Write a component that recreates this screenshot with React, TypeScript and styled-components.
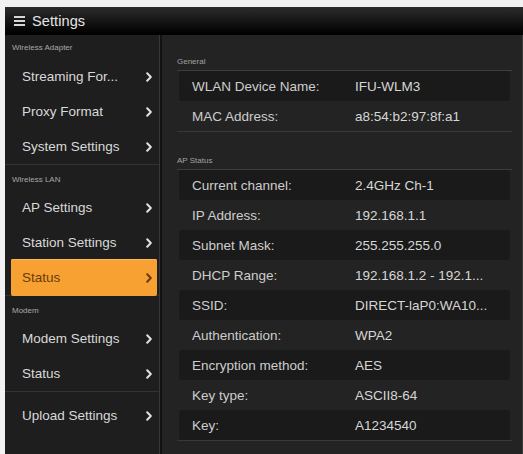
import React from "react";
import styled, { createGlobalStyle, css } from "styled-components";

const GlobalStyle = createGlobalStyle`
  html, body {
    margin: 0;
    padding: 0;
    background: #f2f2f2;
  }
  * { box-sizing: border-box; }
`;

const Frame = styled.div`
  margin: 7px 0 0 5px;
  width: 518px;
  height: 447px;
  display: flex;
  flex-direction: column;
  background: #161616;
  font-family: "Liberation Sans", Arial, Helvetica, sans-serif;
  overflow: hidden;
`;

const TitleBar = styled.div`
  height: 28px;
  flex: none;
  display: flex;
  align-items: center;
  gap: 7px;
  padding-left: 8px;
  background: linear-gradient(#2c2c2c 0%, #141414 55%, #000 100%);
  border-bottom: 1px solid #000;
`;

const MenuIcon = styled.span`
  width: 11px;
  height: 10px;
  display: flex;
  flex-direction: column;
  justify-content: space-between;
  margin-left: 1px;
  & > i {
    display: block;
    height: 2px;
    background: #d6d6d6;
  }
`;

const Title = styled.span`
  color: #e6e6e6;
  font-size: 14.5px;
  letter-spacing: 0.1px;
`;

const Body = styled.div`
  flex: 1;
  min-height: 0;
  display: flex;
`;

const Sidebar = styled.nav`
  width: 155px;
  flex: none;
  background: #1e1e1e;
  border-right: 1px solid #383838;
`;

const Group = styled.div<{ $pad?: boolean; $last?: boolean }>`
  border-bottom: ${(p) => (p.$last ? "none" : "1px solid #333")};
  padding-top: ${(p) => (p.$pad ? "6px" : "0")};
`;

const GroupTitle = styled.div<{ $first?: boolean }>`
  height: ${(p) => (p.$first ? "24px" : "25px")};
  padding: ${(p) => (p.$first ? "8px" : "10px")} 0 0 7px;
  font-size: 8px;
  line-height: 10px;
  color: #a8a8a8;
`;

const Item = styled.div<{ $active?: boolean }>`
  height: 35px;
  display: flex;
  align-items: center;
  justify-content: space-between;
  padding: 0 7px 0 17px;
  font-size: 13.5px;
  color: #d9d9d9;
  ${(p) =>
    p.$active &&
    css`
      height: 37px;
      margin: -1px 2px -1px 6px;
      padding: 0 5px 0 11px;
      background: #f6a132;
      border-radius: 2px;
      color: #6a3b0c;
      box-shadow: inset 0 1px 0 #f9b85a;
      position: relative;
    `}
`;

const Chevron = ({ color }: { color: string }) => (
  <svg width="6" height="10" viewBox="0 0 6 10">
    <path d="M1.2 1.2 L4.8 5 L1.2 8.8" fill="none" stroke={color} strokeWidth="2" strokeLinecap="round" strokeLinejoin="round" />
  </svg>
);

const Main = styled.main`
  flex: 1;
  background: #232323;
  border-left: 2px solid #121212;
  border-right: 1px solid #3c3c3c;
  padding: 18px 10px 0 15px;
`;

const Section = styled.section<{ $gap?: boolean }>`
  margin-top: ${(p) => (p.$gap ? "20px" : "0")};
  border-bottom: 1px solid #383838;
`;

const SectionTitle = styled.div`
  height: 18px;
  line-height: 18px;
  font-size: 8px;
  color: #a2a2a2;
  border-bottom: 1px solid #3c3c3c;
`;

const Row = styled.div<{ $dark?: boolean }>`
  height: 30px;
  margin: 0 2px;
  display: grid;
  grid-template-columns: 163px 1fr;
  align-items: center;
  padding-left: 13px;
  font-size: 13.5px;
  background: ${(p) => (p.$dark ? "#1a1a1a" : "transparent")};
  border-radius: 3px;
`;

const Label = styled.span`
  color: #cdcdcd;
`;

const Value = styled.span`
  color: #d6d6d6;
  white-space: nowrap;
`;

type NavItem = { label: string; active?: boolean };
type NavGroup = { title?: string; items: NavItem[] };

const nav: NavGroup[] = [
  {
    title: "Wireless Adapter",
    items: [{ label: "Streaming For..." }, { label: "Proxy Format" }, { label: "System Settings" }],
  },
  {
    title: "Wireless LAN",
    items: [{ label: "AP Settings" }, { label: "Station Settings" }, { label: "Status", active: true }],
  },
  { title: "Modem", items: [{ label: "Modem Settings" }, { label: "Status" }] },
  { items: [{ label: "Upload Settings" }] },
];

const general: [string, string][] = [
  ["WLAN Device Name:", "IFU-WLM3"],
  ["MAC Address:", "a8:54:b2:97:8f:a1"],
];

const apStatus: [string, string][] = [
  ["Current channel:", "2.4GHz Ch-1"],
  ["IP Address:", "192.168.1.1"],
  ["Subnet Mask:", "255.255.255.0"],
  ["DHCP Range:", "192.168.1.2 - 192.1..."],
  ["SSID:", "DIRECT-laP0:WA10..."],
  ["Authentication:", "WPA2"],
  ["Encryption method:", "AES"],
  ["Key type:", "ASCII8-64"],
  ["Key:", "A1234540"],
];

export default function App() {
  return (
    <>
      <GlobalStyle />
      <Frame>
        <TitleBar>
          <MenuIcon>
            <i />
            <i />
            <i />
          </MenuIcon>
          <Title>Settings</Title>
        </TitleBar>
        <Body>
          <Sidebar>
            {nav.map((g, gi) => (
              <Group key={gi} $pad={!g.title} $last={gi === nav.length - 1}>
                {g.title && <GroupTitle $first={gi === 0}>{g.title}</GroupTitle>}
                {g.items.map((it) => (
                  <Item key={it.label} $active={it.active}>
                    <span>{it.label}</span>
                    <Chevron color={it.active ? "#6a3b0c" : "#e0e0e0"} />
                  </Item>
                ))}
              </Group>
            ))}
          </Sidebar>
          <Main>
            <Section>
              <SectionTitle>General</SectionTitle>
              {general.map(([k, v], i) => (
                <Row key={k} $dark={i % 2 === 0}>
                  <Label>{k}</Label>
                  <Value>{v}</Value>
                </Row>
              ))}
            </Section>
            <Section $gap>
              <SectionTitle>AP Status</SectionTitle>
              {apStatus.map(([k, v], i) => (
                <Row key={k} $dark={i % 2 === 0}>
                  <Label>{k}</Label>
                  <Value>{v}</Value>
                </Row>
              ))}
            </Section>
          </Main>
        </Body>
      </Frame>
    </>
  );
}
